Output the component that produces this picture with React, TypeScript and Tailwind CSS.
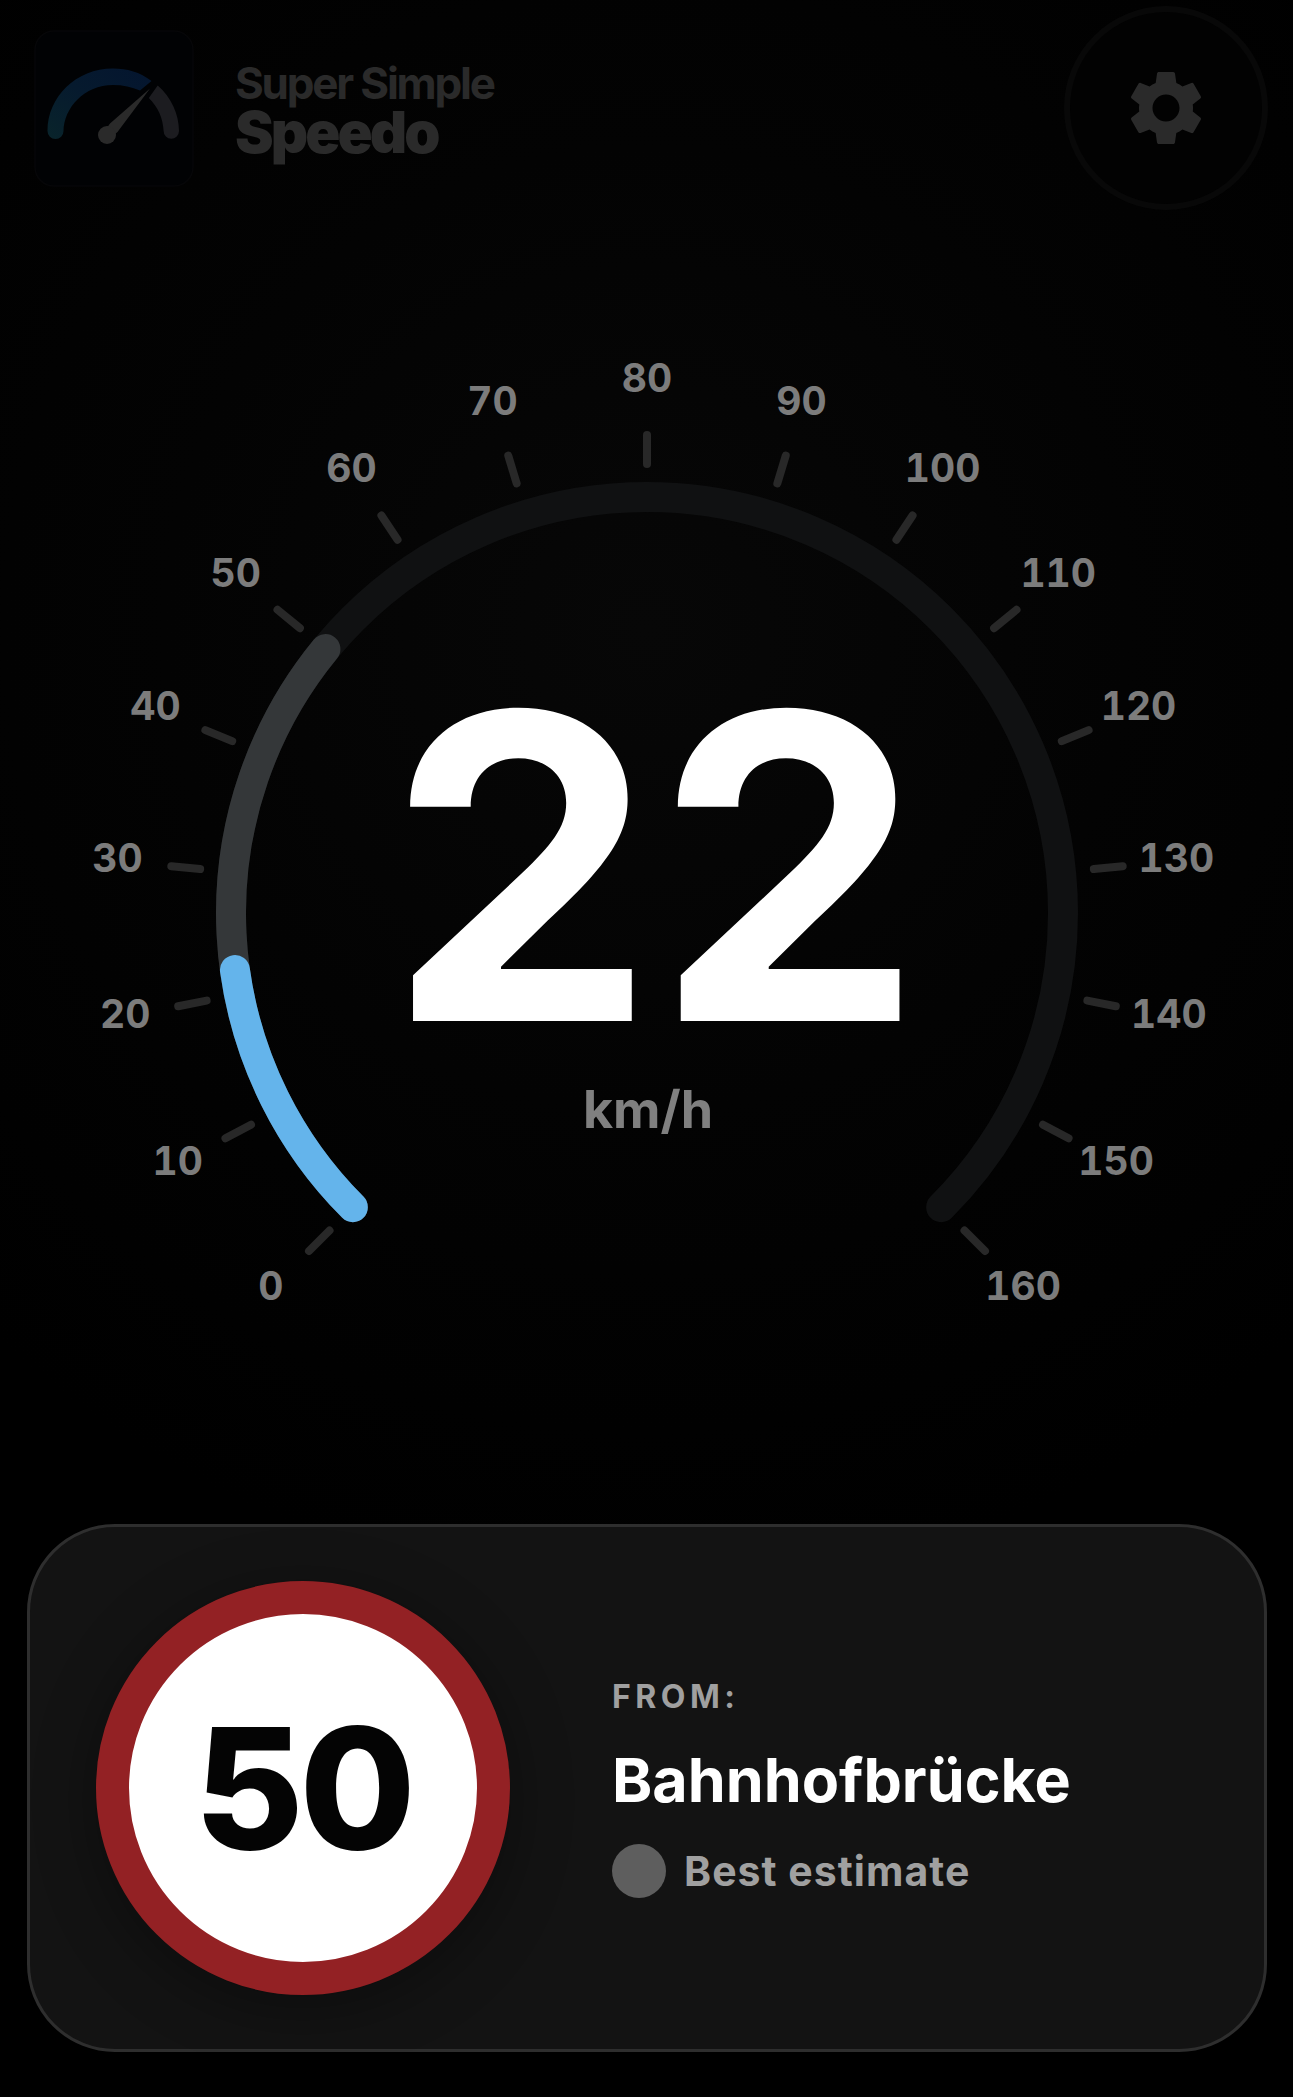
import { MdSettings } from 'react-icons/md';

const MAX_SPEED = 160;
const TICK_STEP = 10;
const START_ANGLE = 225;
const SWEEP = 270;
const RADIUS = 416;

interface GaugeProps {
  speed: number;
  limit: number;
  unit: string;
}

interface LimitCardProps {
  limit: number;
  road: string;
  status: string;
}

// The gauge is drawn around the origin, y grows downwards
function pointAt(value: number, radius: number) {
  const angle = ((START_ANGLE - (value / MAX_SPEED) * SWEEP) * Math.PI) / 180;
  return { x: radius * Math.cos(angle), y: -radius * Math.sin(angle) };
}

function arcPath(from: number, to: number) {
  const a = pointAt(from, RADIUS);
  const b = pointAt(to, RADIUS);
  const large = ((to - from) / MAX_SPEED) * SWEEP > 180 ? 1 : 0;
  return `M ${a.x} ${a.y} A ${RADIUS} ${RADIUS} 0 ${large} 1 ${b.x} ${b.y}`;
}

function Logo() {
  return (
    <svg viewBox="0 0 160 157" className="h-[157px] w-[160px] shrink-0" aria-hidden="true">
      <defs>
        <linearGradient id="logo-arc" x1="0" y1="1" x2="1" y2="0">
          <stop offset="0" stopColor="#09242b" />
          <stop offset="0.5" stopColor="#061a2e" />
          <stop offset="1" stopColor="#04152f" />
        </linearGradient>
      </defs>
      <rect x="1" y="1" width="158" height="155" rx="19" fill="#010204" stroke="#060608" strokeWidth="1.5" />
      <path
        d="M13.500 101 A8 8 0 0 0 29.500 101 C30 78 50 55 79 55 C89 55 98 57 106 60.500 L117.500 51 C106 42 93 38.500 79 38.500 C42 38.500 13.500 67 13.500 101 Z"
        fill="url(#logo-arc)"
      />
      <path
        d="M123.700 55.500 C137 67 145 84 145 101 A7.700 7.700 0 0 1 129.600 101 C129 88 124 77 114.800 68 Z"
        fill="#1c1c20"
      />
      <path d="M116 58.500 L76 93.500 Q75 96 72 97 L81 106 Q81 103 83.500 102 Z" fill="#2a2a2a" />
      <circle cx="73" cy="105" r="9" fill="#2a2a2a" />
    </svg>
  );
}

function Header() {
  return (
    <header className="flex items-center pt-1.5 pr-[25px] pl-[34px]">
      <Logo />
      <h1 className="ml-[41px] text-[#2a2a2a]">
        <span className="block text-[44px] leading-[48px] font-bold tracking-tighter">Super Simple</span>
        <span className="block text-[58px] leading-[50px] font-black tracking-tighter">Speedo</span>
      </h1>
      <button
        type="button"
        aria-label="Settings"
        className="ml-auto flex size-[204px] shrink-0 items-center justify-center rounded-full border-6 border-[#080808] bg-[#020202] text-[#2a2a2a]"
      >
        <MdSettings className="size-[90px]" />
      </button>
    </header>
  );
}

function Gauge({ speed, limit, unit }: GaugeProps) {
  const ticks = Array.from({ length: MAX_SPEED / TICK_STEP + 1 }, (_, i) => i * TICK_STEP);

  return (
    <svg
      viewBox="-647 -573 1293 980"
      className="mt-[130px] w-full"
      role="img"
      aria-label={`${speed} ${unit}`}
    >
      <g fill="none" strokeWidth="30" strokeLinecap="round">
        <path d={arcPath(0, MAX_SPEED)} stroke="#101112" />
        <path d={arcPath(0, limit)} stroke="#343739" />
        <path d={arcPath(0, speed)} stroke="#64b4eb" />
      </g>

      {ticks.map((value) => {
        const inner = pointAt(value, 449);
        const outer = pointAt(value, 478);
        const label = pointAt(value, 532);
        return (
          <g key={value}>
            <line
              x1={inner.x}
              y1={inner.y}
              x2={outer.x}
              y2={outer.y}
              stroke="#282828"
              strokeWidth="8"
              strokeLinecap="round"
            />
            <text
              x={label.x}
              y={label.y + 11}
              textAnchor="middle"
              className="fill-[#7c7c7c] text-[39px] font-bold tabular-nums"
            >
              {value}
            </text>
          </g>
        );
      })}

      <text x="8" y="108" textAnchor="middle" className="fill-white text-[425px] font-bold">
        {speed}
      </text>
      <text x="1" y="215" textAnchor="middle" className="fill-[#808080] text-[52px] font-bold">
        {unit}
      </text>
    </svg>
  );
}

function LimitCard({ limit, road, status }: LimitCardProps) {
  return (
    <section className="mt-auto mr-[26px] mb-[45px] ml-[27px] flex items-center gap-[102px] rounded-[88px] border-3 border-[#2e2e2e] bg-[#131313] px-[66px] py-[54px]">
      <div className="flex size-[414px] shrink-0 items-center justify-center rounded-full border-[33px] border-[#932124] bg-white text-[168px] leading-none font-extrabold tracking-tight text-[#040404] shadow-[0_12px_60px_rgba(0,0,0,0.35)]">
        {limit}
      </div>
      <div className="flex min-w-0 flex-col gap-7">
        <p className="text-[32px] leading-[38px] font-bold tracking-[0.14em] text-[#a0a0a0]">FROM:</p>
        <h2 className="text-[61px] leading-[72px] font-bold text-white">{road}</h2>
        <p className="flex items-center gap-[18px] text-[41px] leading-[54px] font-bold tracking-wide text-[#a0a0a0]">
          <span className="size-[54px] shrink-0 rounded-full bg-[#5e5e5e]" />
          {status}
        </p>
      </div>
    </section>
  );
}

export default function App() {
  return (
    <main className="flex min-h-screen flex-col bg-black bg-[radial-gradient(circle_at_50%_30%,#070707_0%,#030303_30%,#000000_60%)] font-['Inter',sans-serif]">
      <Header />
      <Gauge speed={22} limit={50} unit="km/h" />
      <LimitCard limit={50} road="Bahnhofbrücke" status="Best estimate" />
    </main>
  );
}
